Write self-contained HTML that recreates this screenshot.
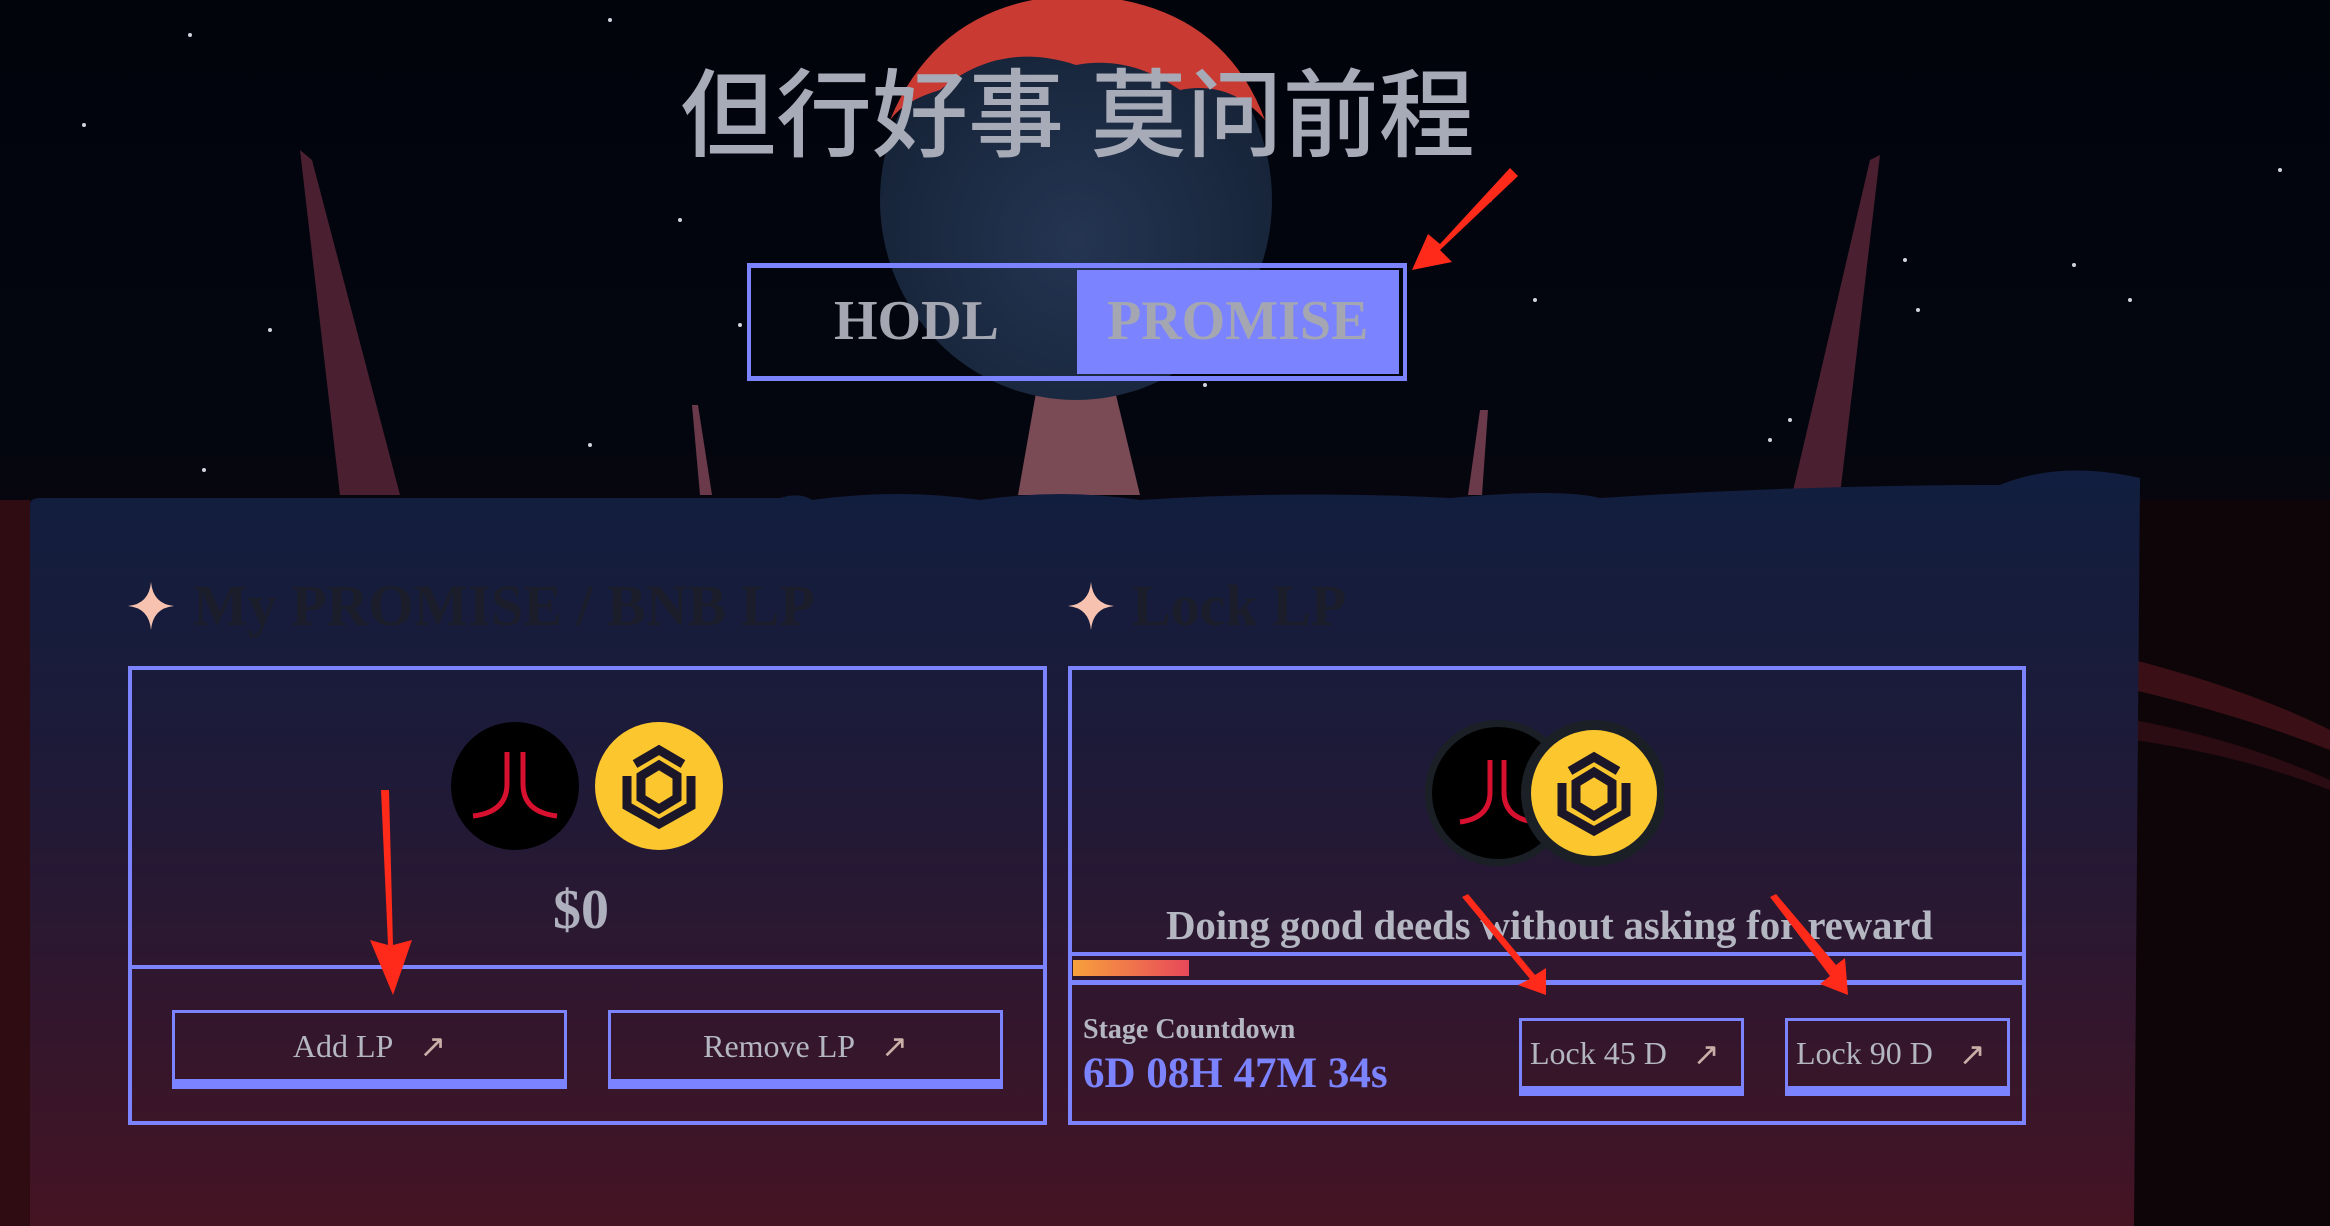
<!DOCTYPE html>
<html><head><meta charset="utf-8"><style>
*{margin:0;padding:0;box-sizing:border-box}
body{width:2330px;height:1226px;overflow:hidden;background:#02040c;position:relative;font-family:"Liberation Serif",serif}
.abs{position:absolute}
.t{position:absolute;white-space:nowrap}
.btn{position:absolute;border:3px solid #7b83ff;border-bottom:10px solid #7b83ff;color:#b4b6c2;font-size:32px;display:flex;align-items:center;justify-content:center}
.arr{color:#c8b0a8;margin-left:26px;font-size:32px}
</style></head><body>
<svg class="abs" style="left:0;top:0" width="2330" height="1226">
<defs>
<radialGradient id="pl" cx="50%" cy="60%" r="60%"><stop offset="0" stop-color="#243552"/><stop offset="1" stop-color="#152236"/></radialGradient>
<linearGradient id="bg" x1="0" y1="0" x2="0" y2="1"><stop offset="0" stop-color="#02040c"/><stop offset="0.35" stop-color="#03060f"/><stop offset="0.5" stop-color="#0e060c"/><stop offset="1" stop-color="#1a070c"/></linearGradient>
<linearGradient id="panel" x1="0" y1="0" x2="0" y2="1"><stop offset="0" stop-color="#111e3f"/><stop offset="0.4" stop-color="#1e1a38"/><stop offset="0.75" stop-color="#34162c"/><stop offset="1" stop-color="#451423"/></linearGradient>
<linearGradient id="prog" x1="0" x2="1"><stop offset="0" stop-color="#f7a13c"/><stop offset="1" stop-color="#e8485a"/></linearGradient>
</defs>
<rect width="2330" height="1226" fill="url(#bg)"/>
<g fill="#cfd3dc">
<circle cx="190" cy="35" r="2"/><circle cx="610" cy="20" r="2"/><circle cx="84" cy="125" r="2"/><circle cx="680" cy="220" r="2"/><circle cx="204" cy="470" r="2"/><circle cx="1790" cy="420" r="2"/><circle cx="1535" cy="300" r="2"/><circle cx="1918" cy="310" r="2"/><circle cx="2280" cy="170" r="2"/><circle cx="2215" cy="740" r="2"/><circle cx="2250" cy="815" r="2"/><circle cx="2195" cy="590" r="2"/><circle cx="60" cy="650" r="2"/><circle cx="270" cy="330" r="2"/><circle cx="215" cy="570" r="2"/><circle cx="1620" cy="620" r="2"/><circle cx="1890" cy="800" r="2"/><circle cx="1490" cy="200" r="2"/><circle cx="2130" cy="300" r="2"/><circle cx="2074" cy="265" r="2"/><circle cx="1770" cy="440" r="2"/><circle cx="590" cy="730" r="2"/><circle cx="1100" cy="650" r="2"/><circle cx="1205" cy="385" r="2"/><circle cx="740" cy="325" r="2"/><circle cx="2280" cy="520" r="2"/><circle cx="1905" cy="260" r="2"/><circle cx="590" cy="445" r="2"/><circle cx="2230" cy="1050" r="2"/><circle cx="2180" cy="900" r="2"/><circle cx="2265" cy="1120" r="2"/>
</g>
<polygon points="300,150 312,160 400,495 340,495" fill="#4a2030"/>
<polygon points="1880,155 1870,160 1792,495 1840,495" fill="#4a2030"/>
<polygon points="692,405 698,405 712,495 700,495" fill="#6a3a4a"/>
<polygon points="1480,410 1488,410 1482,495 1468,495" fill="#6a3a4a"/>
<polygon points="1040,370 1110,370 1140,495 1018,495" fill="#7a4a55"/>
<ellipse cx="1076" cy="200" rx="196" ry="200" fill="url(#pl)"/>
<path d="M890,120 Q940,0 1076,-5 Q1220,0 1265,120 Q1230,80 1180,90 Q1130,55 1076,65 Q1000,40 940,90 Q905,100 890,120Z" fill="#c93a33"/>
<rect x="0" y="500" width="30" height="726" fill="#2e0c12"/>
<rect x="2134" y="500" width="196" height="726" fill="#0e0508"/>
<path d="M2134,660 Q2250,690 2330,730 L2330,750 Q2240,715 2134,690Z" fill="#3a1016"/>
<path d="M2134,720 Q2240,740 2330,780 L2330,790 Q2240,755 2134,740Z" fill="#2a0c12"/>
<path d="M30,505 Q30,498 40,498 L780,498 Q800,492 812,500 Q900,488 980,500 Q1060,488 1140,500 Q1300,490 1450,498 Q1560,488 1600,498 Q1800,485 2000,485 Q2060,460 2140,478 L2134,1226 L30,1226Z" fill="url(#panel)"/>
<rect x="1073" y="960" width="116" height="16" fill="url(#prog)"/>
</svg>

<div class="t" style="left:680px;top:38px;font-size:96px;color:#a7abb8;font-family:'Liberation Sans','Noto Sans CJK SC',sans-serif;font-weight:500;letter-spacing:0px">但行好事 莫问前程</div>

<div class="abs" style="left:747px;top:263px;width:660px;height:118px;border:4px solid #7b83ff;border-top-width:5px;border-bottom-width:5px"></div>
<div class="abs" style="left:1077px;top:270px;width:322px;height:104px;background:#7b83ff"></div>
<div class="t" style="left:834px;top:289px;font-size:56px;font-weight:bold;color:#a4a7b2">HODL</div>
<div class="t" style="left:1107px;top:289px;font-size:56px;font-weight:bold;color:#a4a7b2">PROMISE</div>

<svg class="abs" style="left:128px;top:582px" width="46" height="48" viewBox="0 0 46 48"><path d="M23,0 Q25,22 46,24 Q25,26 23,48 Q21,26 0,24 Q21,22 23,0Z" fill="#f7c3b0"/></svg>
<svg class="abs" style="left:1068px;top:582px" width="46" height="48" viewBox="0 0 46 48"><path d="M23,0 Q25,22 46,24 Q25,26 23,48 Q21,26 0,24 Q21,22 23,0Z" fill="#f7c3b0"/></svg>
<div class="t" style="left:193px;top:572px;font-size:58px;font-weight:bold;color:#1b1e2a">My PROMISE / BNB LP</div>
<div class="t" style="left:1132px;top:572px;font-size:58px;font-weight:bold;color:#1b1e2a">Lock LP</div>

<div class="abs" style="left:128px;top:666px;width:919px;height:459px;border:4px solid #7b83ff"></div>
<div class="abs" style="left:128px;top:965px;width:919px;height:4px;background:#7b83ff"></div>
<svg class="abs" style="left:451px;top:722px" width="272" height="128" viewBox="0 0 272 128">
<circle cx="64" cy="64" r="64" fill="#000"/>
<path d="M56,30 L56,62 Q56,90 22,94 M72,30 L72,62 Q72,90 106,94" stroke="#d6102e" stroke-width="5" fill="none"/>
<circle cx="208" cy="64" r="64" fill="#fcc62f"/>
<g transform="translate(208,64)" fill="none" stroke="#1c1728" stroke-width="9" stroke-linejoin="miter"><path d="M-24,-22 L0,-36 L24,-22"/><path d="M-32,-10 L-32,20 L0,38 L32,20 L32,-10"/><path d="M-18,-10 L0,-21 L18,-10 L18,12 L0,23 L-18,12Z"/></g>
</svg>
<div class="t" style="left:553px;top:878px;font-size:56px;font-weight:bold;color:#aeb0bd">$0</div>
<div class="btn" style="left:172px;top:1010px;width:395px;height:79px">Add LP<span class="arr">↗</span></div>
<div class="btn" style="left:608px;top:1010px;width:395px;height:79px">Remove LP<span class="arr">↗</span></div>

<div class="abs" style="left:1068px;top:666px;width:958px;height:459px;border:4px solid #7b83ff"></div>
<div class="abs" style="left:1068px;top:952px;width:958px;height:4px;background:#7b83ff"></div>
<div class="abs" style="left:1068px;top:980px;width:958px;height:5px;background:#7b83ff"></div>
<svg class="abs" style="left:1424px;top:720px" width="240" height="146" viewBox="0 0 240 146">
<circle cx="74" cy="73" r="73" fill="#1a2025"/>
<circle cx="74" cy="73" r="66" fill="#000"/>
<path d="M66,40 L66,72 Q66,98 36,102 M80,40 L80,72 Q80,98 110,102" stroke="#d6102e" stroke-width="5" fill="none"/>
<circle cx="170" cy="73" r="73" fill="#1a2025"/>
<circle cx="170" cy="73" r="63" fill="#fcc62f"/>
<g transform="translate(170,73)" fill="none" stroke="#1c1728" stroke-width="9"><path d="M-24,-22 L0,-36 L24,-22"/><path d="M-32,-10 L-32,20 L0,38 L32,20 L32,-10"/><path d="M-18,-10 L0,-21 L18,-10 L18,12 L0,23 L-18,12Z"/></g>
</svg>
<div class="t" style="left:1166px;top:901px;font-size:41px;font-weight:bold;color:#b4b6c2;letter-spacing:-0.2px">Doing good deeds without asking for reward</div>
<div class="t" style="left:1083px;top:1014px;font-size:28px;font-weight:bold;color:#b4b6c2">Stage Countdown</div>
<div class="t" style="left:1083px;top:1049px;font-size:43px;font-weight:bold;color:#7b83ff">6D 08H 47M 34s</div>
<div class="btn" style="left:1519px;top:1018px;width:225px;height:78px;justify-content:flex-start;padding-left:8px">Lock 45 D<span class="arr">↗</span></div>
<div class="btn" style="left:1785px;top:1018px;width:225px;height:78px;justify-content:flex-start;padding-left:8px">Lock 90 D<span class="arr">↗</span></div>

<svg class="abs" style="left:0;top:0" width="2330" height="1226">
<g fill="#ff2a1a">
<polygon points="1510,168 1518,176 1440,250 1452,262 1412,270 1428,234 1440,244"/>
<polygon points="381,790 389,790 393,945 412,940 393,995 370,940 388,945"/>
<polygon points="1462,897 1468,894 1535,975 1546,968 1546,995 1518,985 1530,979"/>
<polygon points="1770,897 1776,894 1836,965 1845,958 1848,995 1820,984 1830,976"/>
</g>
</svg>
</body></html>
